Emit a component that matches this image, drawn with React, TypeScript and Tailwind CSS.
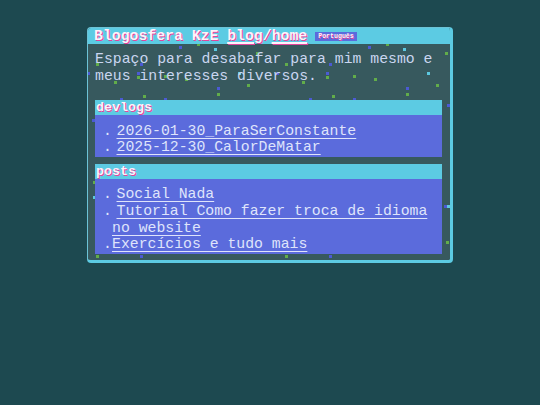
import React from "react";

const G = "#62ad4a";
const B = "#4b5ad4";
const C = "#5cc8e0";

const dots: [number, number, string][] = [
  [180, 47, B], [369, 47, B],
  [198, 44, G], [387, 44, G],
  [215, 49, C], [404, 49, C],
  [257, 53, G], [446, 53, G],
  [97, 64, G], [286, 64, G],
  [141, 64, B], [330, 64, B],
  [138, 73, B], [327, 73, B],
  [138, 77, G], [327, 77, G],
  [88, 73, B], [277, 73, B],
  [115, 82, G], [303, 82, G],
  [218, 88, B], [407, 88, B],
  [218, 94, G], [407, 94, G],
  [248, 85, G], [437, 85, G],
  [144, 96, G], [333, 96, G],
  [121, 99, B], [310, 99, B],
  [165, 99, B], [354, 99, B],
  [239, 73, C], [428, 73, C],
  [165, 76, G], [354, 76, G],
  [186, 79, G], [375, 79, G],
  [259, 105, B], [448, 105, B],
  [97, 256, G], [286, 256, G], [141, 256, B], [330, 256, B],
  [94, 182, G], [94, 197, C], [93, 120, B],
  [445, 206, B], [448, 206, C], [447, 242, G],
];

const mono = "font-['Liberation_Mono','Courier_New',monospace]";
const pinkText = "text-[#fff2fa] [text-shadow:1px_1px_0_#e2459c]";

function Section({ title, items }: { title: string; items: { label: string; space: boolean }[] }) {
  return (
    <div className="relative">
      <div className={`h-[15px] bg-[#5ccbe3] pl-px text-[13.3px] font-bold leading-[15px] ${pinkText}`}>
        {title}
      </div>
      <ul className="bg-[#5b6bdc] pl-[17px] pt-[7.5px] pb-[0.5px] pr-[4px] text-[14.8px] leading-[16.8px] text-[#dfe4fb] [list-style-type:'.']">
        {items.map((it) => (
          <li key={it.label}>
            <a
              href="#"
              className={`underline decoration-1 underline-offset-[3px] ${it.space ? "ml-[4.5px]" : ""}`}
            >
              {it.label}
            </a>
          </li>
        ))}
      </ul>
    </div>
  );
}

export default function App() {
  return (
    <div className={`min-h-[405px] bg-[#1d4950] pt-[27px] ${mono}`}>
      <div className="relative mx-auto w-[366px] overflow-hidden rounded-[4px] border border-r-[3px] border-b-[3px] border-[#6cc3d6] border-r-[#5ccbe3] border-b-[#5ccbe3] bg-[#37595e]">
        <div className="pointer-events-none absolute inset-0">
          {dots.map(([x, y, c], i) => (
            <span
              key={i}
              className="absolute h-[3px] w-[3px]"
              style={{ left: x - 89.5, top: y - 29.5, background: c }}
            />
          ))}
        </div>

        <div className="relative flex h-[16px] items-center bg-[#5ccbe3] pl-[6px]">
          <span className={`text-[14.8px] font-bold leading-[16px] ${pinkText}`}>
            Blogosfera KzE{" "}
            <a href="#" className="underline decoration-[1.5px] underline-offset-[2px]">
              blog
            </a>
            /
            <a href="#" className="underline decoration-[1.5px] underline-offset-[2px]">
              home
            </a>
          </span>
          <button className="ml-[8px] flex h-[9px] items-center bg-[#5b6bdc] px-[3px] text-[6.6px] font-bold leading-[9px] text-[#fff2fa] [text-shadow:0.5px_0.5px_0_#e2459c]">
            Português
          </button>
        </div>

        <div className="relative pl-[7px] pr-[8px] pb-[6px]">
          <p className="pt-[7px] text-[14.8px] leading-[17px] text-[#cad6f0]">
            Espaço para desabafar para mim mesmo e meus interesses diversos.
          </p>
          <div className="mt-[15px] flex flex-col gap-[7px]">
            <Section
              title="devlogs"
              items={[
                { label: "2026-01-30_ParaSerConstante", space: true },
                { label: "2025-12-30_CalorDeMatar", space: true },
              ]}
            />
            <Section
              title="posts"
              items={[
                { label: "Social Nada", space: true },
                { label: "Tutorial Como fazer troca de idioma no website", space: true },
                { label: "Exercícios e tudo mais", space: false },
              ]}
            />
          </div>
        </div>
      </div>
    </div>
  );
}
